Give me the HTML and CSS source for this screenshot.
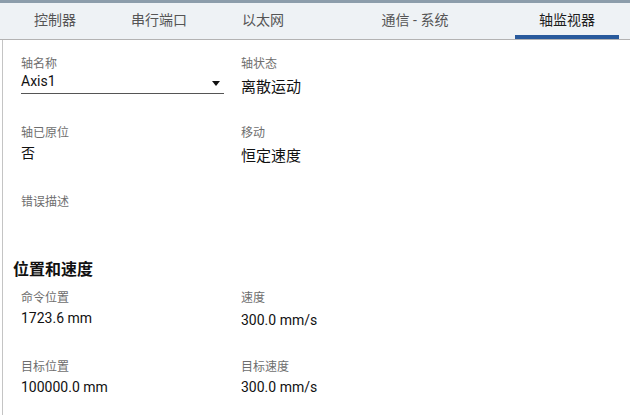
FILE: index.html
```html
<!DOCTYPE html>
<html lang="zh-CN">
<head>
    <meta charset="UTF-8">
    <title>轴监视器</title>
    <link rel="stylesheet" href="styles.css">
</head>
<body>
<div class="tabs">
    <div class="tab">控制器</div>
    <div class="tab">串行端口</div>
    <div class="tab">以太网</div>
    <div class="tab wide">通信 - 系统</div>
    <div class="tab active">轴监视器</div>
</div>

<div class="content">
    <div class="grid">
        <div class="field">
            <div class="label">轴名称</div>
            <div class="select">
                <span>Axis1</span>
                <svg width="8" height="5" viewBox="0 0 8 5"><path d="M0 0 H8 L4 5 Z" fill="#111"/></svg>
            </div>
        </div>
        <div class="field">
            <div class="label">轴状态</div>
            <div class="value low">离散运动</div>
        </div>
        <div class="field">
            <div class="label">轴已原位</div>
            <div class="value">否</div>
        </div>
        <div class="field">
            <div class="label">移动</div>
            <div class="value low">恒定速度</div>
        </div>
        <div class="field">
            <div class="label">错误描述</div>
            <div class="value"></div>
        </div>
    </div>

    <h3 class="section-title">位置和速度</h3>
    <div class="grid">
        <div class="field">
            <div class="label">命令位置</div>
            <div class="value">1723.6 mm</div>
        </div>
        <div class="field">
            <div class="label">速度</div>
            <div class="value mid">300.0 mm/s</div>
        </div>
        <div class="field">
            <div class="label">目标位置</div>
            <div class="value">100000.0 mm</div>
        </div>
        <div class="field">
            <div class="label">目标速度</div>
            <div class="value">300.0 mm/s</div>
        </div>
    </div>
</div>
</body>
</html>
```

FILE: styles.css
```css
body {
    margin: 0;
    font-family: Roboto, "Noto Sans CJK SC", sans-serif;
    background-color: #fff;
    color: #111;
}
.tabs {
    display: flex;
    height: 36px;
    padding-left: 3px;
    background-color: #eef2f5;
    border-top: 3px solid #8c9dab;
    border-bottom: 1px solid #b3b3b3;
}
.tab {
    width: 104px;
    text-align: center;
    font-size: 14px;
    line-height: 34px;
    color: #555;
    box-sizing: border-box;
}
.tab.wide {
    width: 200px;
}
.tab.active {
    color: #1e1e1e;
    border-bottom: 4px solid #285a9c;
    height: 36px;
}
.content {
    margin-left: 2px;
    border-left: 1px solid #c4c4c4;
    padding: 17px 0 0 10px;
    min-height: calc(100vh - 40px);
    box-sizing: border-box;
}
.grid {
    display: grid;
    grid-template-columns: 220px 1fr;
    grid-auto-rows: 69px;
    margin-left: 8px;
}
.label {
    font-size: 12px;
    line-height: 15px;
    color: #6e6e6e;
}
.value {
    font-size: 14px;
    line-height: 20px;
    margin-top: 2px;
}
.value.low {
    font-size: 15px;
    margin-top: 5px;
}
.value.mid {
    margin-top: 4px;
}
.select {
    width: 203px;
    margin-top: -1px;
    display: flex;
    justify-content: space-between;
    align-items: flex-end;
    font-size: 14px;
    line-height: 20px;
    padding-bottom: 2px;
    border-bottom: 1px solid #555;
}
.select svg {
    margin: 0 4px 5px 0;
}
.section-title {
    margin: -5px 0 10px;
    font-size: 16px;
    line-height: 22px;
    font-weight: bold;
}
```
